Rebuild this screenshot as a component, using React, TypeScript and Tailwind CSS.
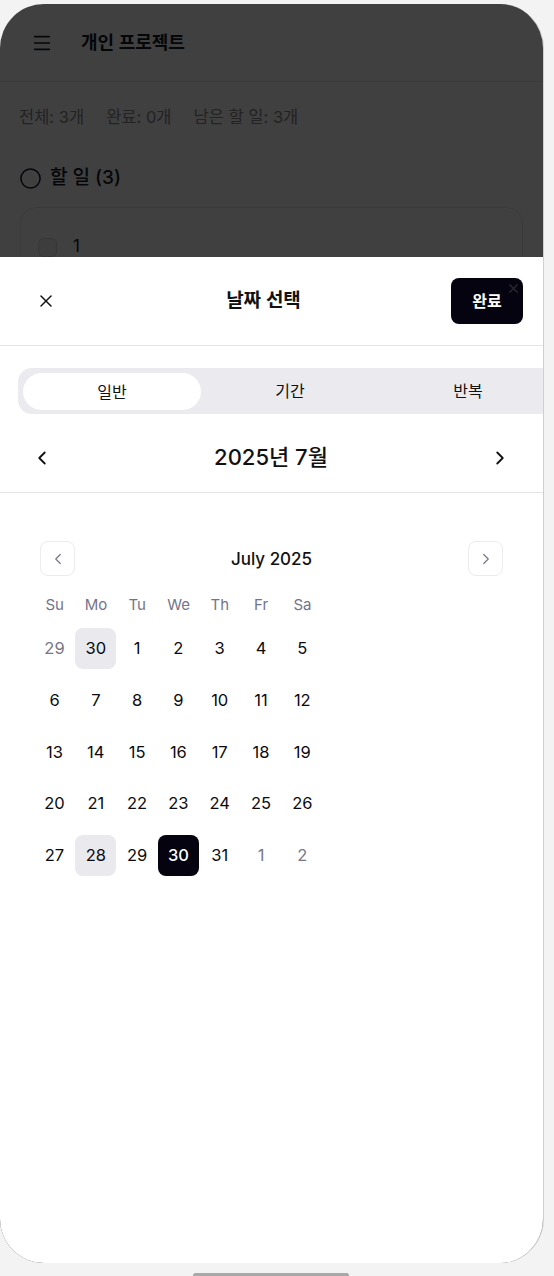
import { ChevronLeft, ChevronRight, Circle, Menu, X } from 'lucide-react'

const font = { fontFamily: 'Inter, "Noto Sans CJK KR", sans-serif' }

type Day = { n: number; muted?: boolean; soft?: boolean; selected?: boolean }

const weeks: Day[][] = [
    [{ n: 29, muted: true }, { n: 30, soft: true }, { n: 1 }, { n: 2 }, { n: 3 }, { n: 4 }, { n: 5 }],
    [{ n: 6 }, { n: 7 }, { n: 8 }, { n: 9 }, { n: 10 }, { n: 11 }, { n: 12 }],
    [{ n: 13 }, { n: 14 }, { n: 15 }, { n: 16 }, { n: 17 }, { n: 18 }, { n: 19 }],
    [{ n: 20 }, { n: 21 }, { n: 22 }, { n: 23 }, { n: 24 }, { n: 25 }, { n: 26 }],
    [{ n: 27 }, { n: 28, soft: true }, { n: 29 }, { n: 30, selected: true }, { n: 31 }, { n: 1, muted: true }, { n: 2, muted: true }],
]

const weekdays = ['Su', 'Mo', 'Tu', 'We', 'Th', 'Fr', 'Sa']

function DayCell({ day }: { day: Day }) {
    let cls = 'text-[#0a0a10]'
    if (day.muted) cls = 'text-[#777787]'
    if (day.soft) cls = 'bg-[#e9e9ee] text-[#0a0a10]'
    if (day.selected) cls = 'bg-[#05030f] text-white font-medium'
    return (
        <div className={`w-[41px] h-[41px] flex items-center justify-center rounded-lg text-[16.5px] ${cls}`}>
            {day.n}
        </div>
    )
}

export default function App() {
    return (
        <div className="w-[554px] h-[1276px] bg-[#f3f3f3] overflow-hidden pt-1" style={font}>
            {/* Phone frame */}
            <div className="relative w-[544px] h-[1259px] rounded-[44px] overflow-hidden bg-white border-r border-[#cfcfcf]">
                {/* Page behind the sheet */}
                <div className="h-[78px] flex items-center gap-[28px] px-[31px] border-b border-[#e8e8e8]">
                    <Menu size={22} strokeWidth={1.8} className="text-gray-900" />
                    <h1 className="text-[18px] font-semibold text-gray-900">개인 프로젝트</h1>
                </div>
                <div className="px-[19px]">
                    <div className="flex gap-[22px] pt-[23px] text-[16.5px] text-[#8a8a8a]">
                        <span>전체: 3개</span>
                        <span>완료: 0개</span>
                        <span>남은 할 일: 3개</span>
                    </div>
                    <div className="flex items-center gap-[8px] mt-[34px]">
                        <Circle size={23} strokeWidth={1.6} className="text-gray-900" />
                        <span className="text-[19px] font-medium text-gray-900">할 일 (3)</span>
                    </div>
                    <div className="mt-[15px] ml-px w-[503px] h-[120px] rounded-2xl border border-[#e6e6e6] px-[17px] pt-[26px]">
                        <div className="flex items-center gap-[16px]">
                            <div className="w-[19px] h-[19px] rounded-[5px] border border-[#d8d8d8] bg-[#f4f4f4]" />
                            <span className="text-[17px] text-gray-900">1</span>
                        </div>
                    </div>
                </div>

                {/* Overlay */}
                <div className="absolute inset-0 bg-black/75" />

                {/* Bottom sheet */}
                <div className="absolute left-0 right-0 top-[253px] bottom-0 bg-white">
                    {/* Sheet header */}
                    <div className="relative h-[89px] flex items-center justify-between pl-[36px] pr-[20px] border-b border-[#e5e5e7]">
                        <X size={20} strokeWidth={1.8} className="text-[#111]" />
                        <h2 className="absolute left-0 right-0 text-center text-[19px] font-semibold text-[#111] pointer-events-none -translate-x-[8px]">
                            날짜 선택
                        </h2>
                        <button className="relative w-[72px] h-[46px] rounded-lg bg-[#05030f] text-white text-[16px] font-semibold">
                            완료
                            <X size={15} strokeWidth={2} className="absolute right-[2px] top-[3px] text-[#2c2c30]" />
                        </button>
                    </div>

                    {/* Segmented control */}
                    <div className="mt-[22px] ml-[18px] w-[560px] h-[46px] rounded-[14px] bg-[#ebebef] p-[5px] flex">
                        <div className="w-[178px] h-[37px] rounded-full bg-white flex items-center justify-center text-[16px] text-[#111]">
                            일반
                        </div>
                        <div className="w-[178px] flex items-center justify-center text-[16px] text-[#111]">기간</div>
                        <div className="w-[178px] flex items-center justify-center text-[16px] text-[#111]">반복</div>
                    </div>

                    {/* Month nav */}
                    <div className="h-[79px] pt-[9px] flex items-center justify-between pl-[31px] pr-[32px] border-b border-[#e5e5e7]">
                        <ChevronLeft size={22} strokeWidth={2} className="text-[#111]" />
                        <span className="text-[22px] font-medium text-[#111]">2025년 7월</span>
                        <ChevronRight size={22} strokeWidth={2} className="text-[#111]" />
                    </div>

                    {/* Calendar */}
                    <div className="pt-[48px] pl-[34px]">
                        <div className="ml-[6px] w-[463px] flex items-center justify-between">
                            <button className="w-[35px] h-[35px] rounded-lg border border-[#ececef] flex items-center justify-center">
                                <ChevronLeft size={18} strokeWidth={1.6} className="text-[#77778a]" />
                            </button>
                            <span className="text-[17px] font-medium text-[#111] translate-y-[1px]">July 2025</span>
                            <button className="w-[35px] h-[35px] rounded-lg border border-[#ececef] flex items-center justify-center">
                                <ChevronRight size={18} strokeWidth={1.6} className="text-[#77778a]" />
                            </button>
                        </div>
                        <div className="mt-[19px] grid grid-cols-[repeat(7,41.3px)]">
                            {weekdays.map((w) => (
                                <div key={w} className="h-[20px] flex items-center justify-center text-[15px] text-[#73738a]">
                                    {w}
                                </div>
                            ))}
                        </div>
                        <div className="mt-[13px] flex flex-col gap-y-[10.75px]">
                            {weeks.map((week, i) => (
                                <div key={i} className="grid grid-cols-[repeat(7,41.3px)]">
                                    {week.map((d, j) => (
                                        <DayCell key={j} day={d} />
                                    ))}
                                </div>
                            ))}
                        </div>
                    </div>
                </div>
            </div>
            {/* Home indicator */}
            <div className="mt-[10px] ml-[193px] w-[156px] h-[5px] rounded-full bg-[#a8a8a8]" />
        </div>
    )
}
